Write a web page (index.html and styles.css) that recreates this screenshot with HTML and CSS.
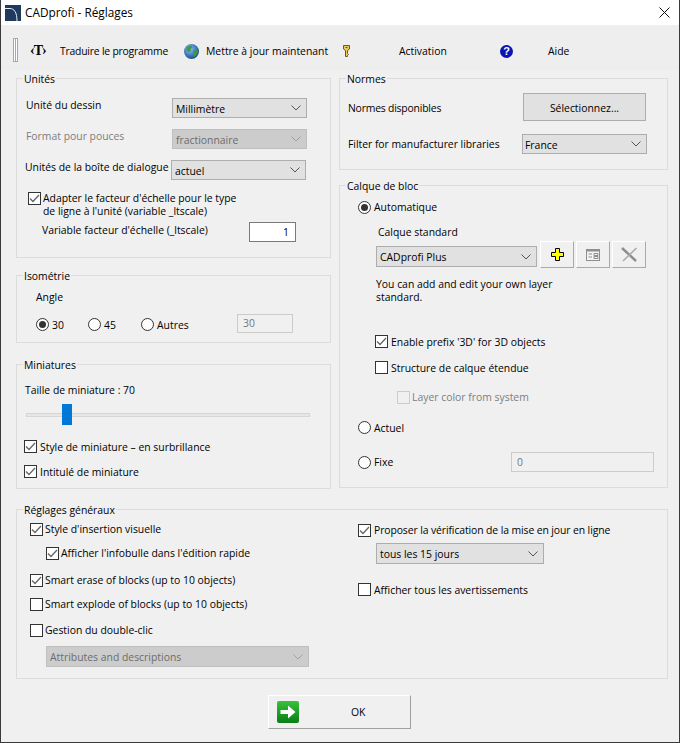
FILE: index.html
```html
<!DOCTYPE html>
<html lang="fr">
<head>
<meta charset="utf-8">
<title>CADprofi - Réglages</title>
<link rel="stylesheet" href="styles.css">
</head>
<body>
<svg class="defs" width="0" height="0" aria-hidden="true">
  <defs>
    <symbol id="chev" viewBox="0 0 10 6"><path d="M.5.5 5 5 9.5.5" fill="none" stroke="currentColor"/></symbol>
    <symbol id="tick" viewBox="0 0 11 11"><path d="M1 5.5 4 8.5 10 2" fill="none" stroke="#666" stroke-width="1.3"/></symbol>
    <radialGradient id="sea" cx=".4" cy=".35" r=".75"><stop offset="0" stop-color="#8fc0ee"/><stop offset=".6" stop-color="#3a74b8"/><stop offset="1" stop-color="#1d3f73"/></radialGradient>
    <linearGradient id="green" x1="0" y1="0" x2="0" y2="1"><stop offset="0" stop-color="#37c23a"/><stop offset="1" stop-color="#0a7d17"/></linearGradient>
  </defs>
</svg>
<main class="window">
  <header class="titlebar">
    <svg class="logo" width="16" height="16" viewBox="0 0 16 16"><rect width="16" height="16" fill="#1f3a5c"/><path d="M0 3.5H5C9 3.5 12 7 12 16" fill="none" stroke="#e8eef5"/></svg>
    <span class="title">CADprofi - Réglages</span>
    <svg class="close" width="11" height="11" viewBox="0 0 11 11"><path d="M.5.5 10.5 10.5M10.5.5.5 10.5" stroke="#111" fill="none"/></svg>
  </header>

  <nav class="toolbar">
    <span class="gripper"></span>
    <span class="tool-t">‹T›</span>
    <span class="tool-tight">Traduire le programme</span>
    <svg width="15" height="15" viewBox="0 0 15 15"><circle cx="7.5" cy="7.5" r="7.5" fill="url(#sea)"/><path d="M3 3 7 1.5 8.5 3.5 6.5 5 7 7 4.5 8 2.5 6ZM9 7 13 6 13.5 9 10.5 13 9 10Z" fill="#3f9a45"/></svg>
    <span>Mettre à jour maintenant</span>
    <svg width="7" height="12" viewBox="0 0 7 12"><path d="M.5.5H6.500V4L4.500 5.500V8.500L5.500 9.500 4.500 10.500V11.500H2.500V5.500L.5 4Z" fill="#e9c85c" stroke="#6b5a1c"/><path d="M2.500 2.500H4.500" stroke="#6b5a1c"/></svg>
    <span>Activation</span>
    <span class="tool-help">?</span>
    <span>Aide</span>
  </nav>

  <div class="columns">
    <div class="column column-left">
      <fieldset class="group group-units">
        <legend>Unités</legend>
        <div class="unit-row">
          <span class="unit-label">Unité du dessin</span>
          <div class="select select-unit"><span>Millimètre</span><svg class="chev"><use href="#chev"/></svg></div>
        </div>
        <div class="unit-row">
          <span class="unit-label is-disabled">Format pour pouces</span>
          <div class="select select-unit select-disabled"><span>fractionnaire</span><svg class="chev"><use href="#chev"/></svg></div>
        </div>
        <div class="unit-row unit-row-tight">
          <span class="unit-label">Unités de la boîte de dialogue</span>
          <div class="select select-unit"><span>actuel</span><svg class="chev"><use href="#chev"/></svg></div>
        </div>
        <label class="check-row scale-check">
          <span class="box"><svg class="tick"><use href="#tick"/></svg></span>
          <span class="wrap-text">Adapter le facteur d'échelle pour le type<br>de ligne à l'unité (variable _ltscale)</span>
        </label>
        <div class="scale-row">
          <span class="scale-label">Variable facteur d'échelle (_ltscale)</span>
          <span class="input scale-input">1</span>
        </div>
      </fieldset>

      <fieldset class="group group-iso">
        <legend>Isométrie</legend>
        <div class="angle-label">Angle</div>
        <div class="angle-row">
          <label class="radio-row"><span class="radio is-on"></span><span>30</span></label>
          <label class="radio-row"><span class="radio"></span><span>45</span></label>
          <label class="radio-row"><span class="radio"></span><span>Autres</span></label>
          <span class="input input-disabled">30</span>
        </div>
      </fieldset>

      <fieldset class="group group-thumbs">
        <legend>Miniatures</legend>
        <div class="thumb-label">Taille de miniature : 70</div>
        <div class="slider"><span class="slider-track"></span><span class="slider-thumb"></span></div>
        <label class="check-row thumb-check first">
          <span class="box"><svg class="tick"><use href="#tick"/></svg></span><span>Style de miniature – en surbrillance</span>
        </label>
        <label class="check-row thumb-check second">
          <span class="box"><svg class="tick"><use href="#tick"/></svg></span><span>Intitulé de miniature</span>
        </label>
      </fieldset>
    </div>

    <div class="column column-right">
      <fieldset class="group group-norms">
        <legend>Normes</legend>
        <div class="norm-row">
          <span class="norm-label norm-label-first">Normes disponibles</span>
          <button class="push" type="button">Sélectionnez...</button>
        </div>
        <div class="norm-row norm-row-second">
          <span class="norm-label norm-label-tight">Filter for manufacturer libraries</span>
          <div class="select select-country"><span>France</span><svg class="chev"><use href="#chev"/></svg></div>
        </div>
      </fieldset>

      <fieldset class="group group-layer">
        <legend>Calque de bloc</legend>
        <label class="radio-row layer-auto"><span class="radio is-on"></span><span>Automatique</span></label>
        <div class="layer-std">Calque standard</div>
        <div class="layer-tools">
          <div class="select select-layer"><span>CADprofi Plus</span><svg class="chev"><use href="#chev"/></svg></div>
          <button class="raised" type="button"><svg width="13" height="13" viewBox="0 0 13 13"><path d="M4.500.5H8.500V4.500H12.500V8.500H8.500V12.500H4.500V8.500H.5V4.500H4.500Z" fill="#ff0" stroke="#000"/></svg></button>
          <button class="raised" type="button"><svg width="14" height="12" viewBox="0 0 14 12"><rect x=".5" y=".5" width="13" height="11" fill="#f4f4f4" stroke="#8f8f8f"/><path d="M.5 1.500H13.500" stroke="#8f8f8f" stroke-width="2"/><path d="M2.500 5H6M2.500 8H6M8 4.500H12V6.500H8ZM8 7.500H12V9.500H8Z" fill="none" stroke="#8f8f8f"/></svg></button>
          <button class="raised" type="button"><svg width="17" height="15" viewBox="0 0 17 15"><path d="M1 1 15 14" stroke="#8c8c8c" stroke-width="2.400"/><path d="M15.500 1 2 14" stroke="#a8a8a8" stroke-width="1.500"/></svg></button>
        </div>
        <p class="layer-note">You can add and edit your own layer<br>standard.</p>
        <label class="check-row layer-check prefix">
          <span class="box"><svg class="tick"><use href="#tick"/></svg></span><span>Enable prefix '3D' for 3D objects</span>
        </label>
        <label class="check-row layer-check structure">
          <span class="box"></span><span>Structure de calque étendue</span>
        </label>
        <label class="check-row layer-color is-disabled">
          <span class="box box-disabled"></span><span>Layer color from system</span>
        </label>
        <label class="radio-row layer-current"><span class="radio"></span><span>Actuel</span></label>
        <div class="fixed-row">
          <label class="radio-row fixed-radio"><span class="radio"></span><span>Fixe</span></label>
          <span class="input input-disabled fixed-input">0</span>
        </div>
      </fieldset>
    </div>
  </div>

  <fieldset class="group group-general">
    <legend>Réglages généraux</legend>
    <div class="general-grid">
      <div class="general-left">
        <label class="check-row gen-check gen-visual"><span class="box"><svg class="tick"><use href="#tick"/></svg></span><span>Style d'insertion visuelle</span></label>
        <label class="check-row gen-check gen-tip"><span class="box"><svg class="tick"><use href="#tick"/></svg></span><span>Afficher l'infobulle dans l'édition rapide</span></label>
        <label class="check-row gen-check gen-erase"><span class="box"><svg class="tick"><use href="#tick"/></svg></span><span>Smart erase of blocks (up to 10 objects)</span></label>
        <label class="check-row gen-check gen-explode"><span class="box"></span><span>Smart explode of blocks (up to 10 objects)</span></label>
        <label class="check-row gen-check gen-double"><span class="box"></span><span>Gestion du double-clic</span></label>
        <div class="select select-disabled select-attr"><span>Attributes and descriptions</span><svg class="chev"><use href="#chev"/></svg></div>
      </div>
      <div class="general-right">
        <label class="check-row gen-right-check gen-update"><span class="box"><svg class="tick"><use href="#tick"/></svg></span><span class="update-text">Proposer la vérification de la mise en jour en ligne</span></label>
        <div class="select select-days"><span>tous les 15 jours</span><svg class="chev"><use href="#chev"/></svg></div>
        <label class="check-row gen-right-check gen-warn"><span class="box"></span><span>Afficher tous les avertissements</span></label>
      </div>
    </div>
  </fieldset>

  <div class="actions">
    <button class="ok" type="button">
      <svg width="22" height="22" viewBox="0 0 22 22"><rect width="22" height="22" rx="2" fill="url(#green)"/><path d="M3.500 9H11V4.500L18.500 11 11 17.500V13H3.500Z" fill="#fff"/></svg>
      <span class="ok-label">OK</span>
    </button>
  </div>
</main>
</body>
</html>
```

FILE: styles.css
```css
* { box-sizing: border-box; }
html, body { margin: 0; padding: 0; }
body { font: 10.4px/13px "Open Sans", sans-serif; color: #000; background: #f0f0f0; }
.defs { position: absolute; }
.window { width: 680px; height: 743px; background: #f0f0f0; border: 1px solid #3a3a3a; border-top: 0; overflow: hidden; }

/* title bar */
.titlebar { display: flex; align-items: center; height: 25px; padding: 0 9px 0 4px; background: #fff; }
.logo { margin-right: 4px; }
.title { font-size: 11.8px; }
.close { margin-left: auto; }

/* toolbar */
.toolbar { display: grid; grid-template-columns: 29px 30px 124px 22px 137px 56px 101px 48px auto; align-items: center; height: 45px; background: #eee; padding-top: 7px; white-space: nowrap; }
.gripper { justify-self: end; width: 5px; height: 24px; margin: 0 12px 2px 0; border: 1px solid #a8a8a8; background: linear-gradient(90deg, #fff 0 40%, #a8a8a8 40% 60%, #fff 60%); }
.tool-t { font: bold 14px/16px "Liberation Serif", serif; letter-spacing: -1px; color: #000; }
.tool-tight { letter-spacing: -.22px; }
.tool-help { display: block; width: 13px; height: 13px; border-radius: 50%; background: #0a12b8; color: #fff; font: bold 11px/13px "Liberation Sans", sans-serif; text-align: center; }

/* layout */
.columns { display: grid; grid-template-columns: 315px 329px; column-gap: 8px; padding-left: 15px; }
.column { display: flex; flex-direction: column; }
.group { margin: 0; padding: 0; border: 1px solid #dcdcdc; min-width: 0; }
.group legend { margin-left: 6px; padding: 0 1px; height: 16px; line-height: 18px; }
.group-units { padding-bottom: 15px; }
.group-iso { margin-top: 9px; padding-bottom: 9px; }
.group-thumbs { margin-top: 13px; padding-bottom: 10px; }
.group-norms { padding-bottom: 15px; }
.group-layer { margin-top: 7px; padding-bottom: 15px; }
.group-general { width: 652px; margin: 12px 0 0 15px; padding-bottom: 11px; }

/* controls */
.select { display: flex; align-items: center; justify-content: space-between; padding: 0 5px 0 3px; height: 20px; background: #e1e1e1; border: 1px solid #adadad; white-space: nowrap; }
.select > span { margin-top: 2px; }
.select .chev { width: 10px; height: 6px; color: #555; }
.select-disabled { background: #ccc; border-color: #bfbfbf; color: #6d6d6d; }
.select-disabled .chev { color: #a0a0a0; }
.input { display: flex; align-items: center; justify-content: flex-end; padding: 0 6px; background: #fff; border: 1px solid #7a7a7a; }
.input-disabled { justify-content: flex-start; padding: 0 5px; background: #f0f0f0; border: 1px solid #ccc; color: #777; }
.box { flex: none; width: 13px; height: 13px; background: #fff; border: 1px solid #333; display: block; }
.box-disabled { border-color: #ccc; background: #f0f0f0; }
.tick { display: block; width: 11px; height: 11px; }
.radio { flex: none; display: flex; align-items: center; justify-content: center; width: 13px; height: 13px; border-radius: 50%; background: #fff; border: 1px solid #333; }
.radio.is-on::after { content: ""; width: 7px; height: 7px; border-radius: 50%; background: #333; }
.check-row, .radio-row { display: flex; align-items: flex-start; white-space: nowrap; }
.radio-row { column-gap: 3px; }
.is-disabled { color: #7d7d7d; }
.push { width: 123px; height: 28px; padding: 2px 0 0; background: #e1e1e1; border: 1px solid #adadad; font: inherit; color: inherit; }
.raised { display: flex; align-items: center; justify-content: center; width: 34px; height: 27px; padding: 0; background: #f0f0f0; border: 1px solid; border-color: #fff #a9a9a9 #a9a9a9 #fff; }

/* rows whose caption sits a pixel below the top of the control */
.angle-row .radio-row > span:last-child,
.thumb-check > span:last-child,
.prefix > span:last-child,
.structure > span:last-child,
.layer-current > span:last-child,
.gen-warn > span:last-child { height: 13px; line-height: 15px; }

/* units */
.unit-row { display: flex; height: 20px; margin-top: 11px; padding-left: 9px; white-space: nowrap; }
.group-units legend + .unit-row { margin-top: 12px; }
.unit-row-tight { padding-left: 8px; }
.unit-label { width: 146px; line-height: 14px; }
.select-unit { width: 135px; }
.scale-check { margin-top: 12px; padding-left: 11px; column-gap: 2px; }
.scale-row { display: flex; height: 20px; margin-top: 4px; padding-left: 25px; white-space: nowrap; }
.scale-label { width: 207px; line-height: 16px; }
.scale-input { width: 47px; }

/* isometry */
.angle-label { margin-top: 6px; padding-left: 19px; line-height: 16px; }
.angle-row { display: grid; grid-template-columns: 52px 53px 96px 56px; align-items: center; height: 19px; margin-top: 9px; padding-left: 19px; }
.angle-row .radio-row { padding-top: 2px; }
.angle-row .input { height: 19px; }

/* thumbnails */
.thumb-label { margin-top: 10px; padding-left: 8px; line-height: 16px; }
.slider { position: relative; display: flex; align-items: center; width: 284px; height: 21px; margin: 6px 0 0 9px; }
.slider-track { width: 100%; height: 4px; background: #e7e7e7; border: 1px solid #d6d6d6; }
.slider-thumb { position: absolute; left: 36px; top: 0; width: 10px; height: 21px; background: #0078d7; }
.thumb-check { padding-left: 7px; column-gap: 3px; }
.thumb-check.first { margin-top: 15px; }
.thumb-check.second { margin-top: 12px; }

/* norms */
.norm-row { display: flex; align-items: center; margin-top: 7px; padding-left: 8px; white-space: nowrap; }
.norm-row-second { margin-top: 13px; }
.norm-label { width: 175px; }
.norm-label-first { padding-top: 2px; letter-spacing: -.2px; }
.norm-label-tight { width: 174px; letter-spacing: -.03px; }
.select-country { width: 125px; padding-left: 2px; }

/* block layer */
.layer-auto { margin-top: 8px; padding-left: 18px; }
.layer-std { margin-top: 10px; padding-left: 38px; line-height: 16px; }
.layer-tools { display: flex; align-items: flex-end; column-gap: 2px; height: 27px; margin-top: 1px; padding-left: 36px; }
.select-layer { width: 161px; height: 21px; margin: 0 1px 1px 0; }
.layer-note { margin: 10px 0 0; padding-left: 36px; }
.layer-check { padding-left: 35px; column-gap: 3px; }
.prefix { margin-top: 31px; }
.structure { margin-top: 13px; }
.layer-color { margin-top: 17px; padding-left: 57px; column-gap: 2px; }
.layer-current { margin-top: 17px; padding-left: 18px; }
.fixed-row { display: flex; align-items: center; height: 20px; margin-top: 18px; padding-left: 18px; }
.fixed-radio { width: 153px; }
.fixed-input { width: 143px; height: 20px; }

/* general settings */
.general-grid { display: grid; grid-template-columns: 323px 1fr; }
.gen-check { padding-left: 13px; column-gap: 2px; }
.gen-visual { margin-top: 6px; }
.gen-tip { margin-top: 11px; padding-left: 29px; }
.gen-erase { margin-top: 14px; }
.gen-explode { margin-top: 11px; }
.gen-double { margin-top: 13px; }
.select-attr { width: 263px; height: 21px; margin: 9px 0 0 29px; }
.gen-right-check { padding-left: 18px; column-gap: 3px; }
.gen-update { margin-top: 7px; }
.update-text { letter-spacing: -.1px; }
.select-days { width: 168px; height: 21px; margin: 6px 0 0 36px; }
.gen-warn { margin-top: 19px; }

/* footer */
.actions { display: flex; justify-content: center; margin-top: 16px; padding-right: 1px; }
.ok { display: flex; align-items: center; width: 143px; height: 34px; padding: 0 0 0 8px; background: #f0f0f0; border: 1px solid; border-color: #fff #a0a0a0 #a0a0a0 #fff; font: inherit; color: inherit; }
.ok-label { margin-left: 52px; }
```
